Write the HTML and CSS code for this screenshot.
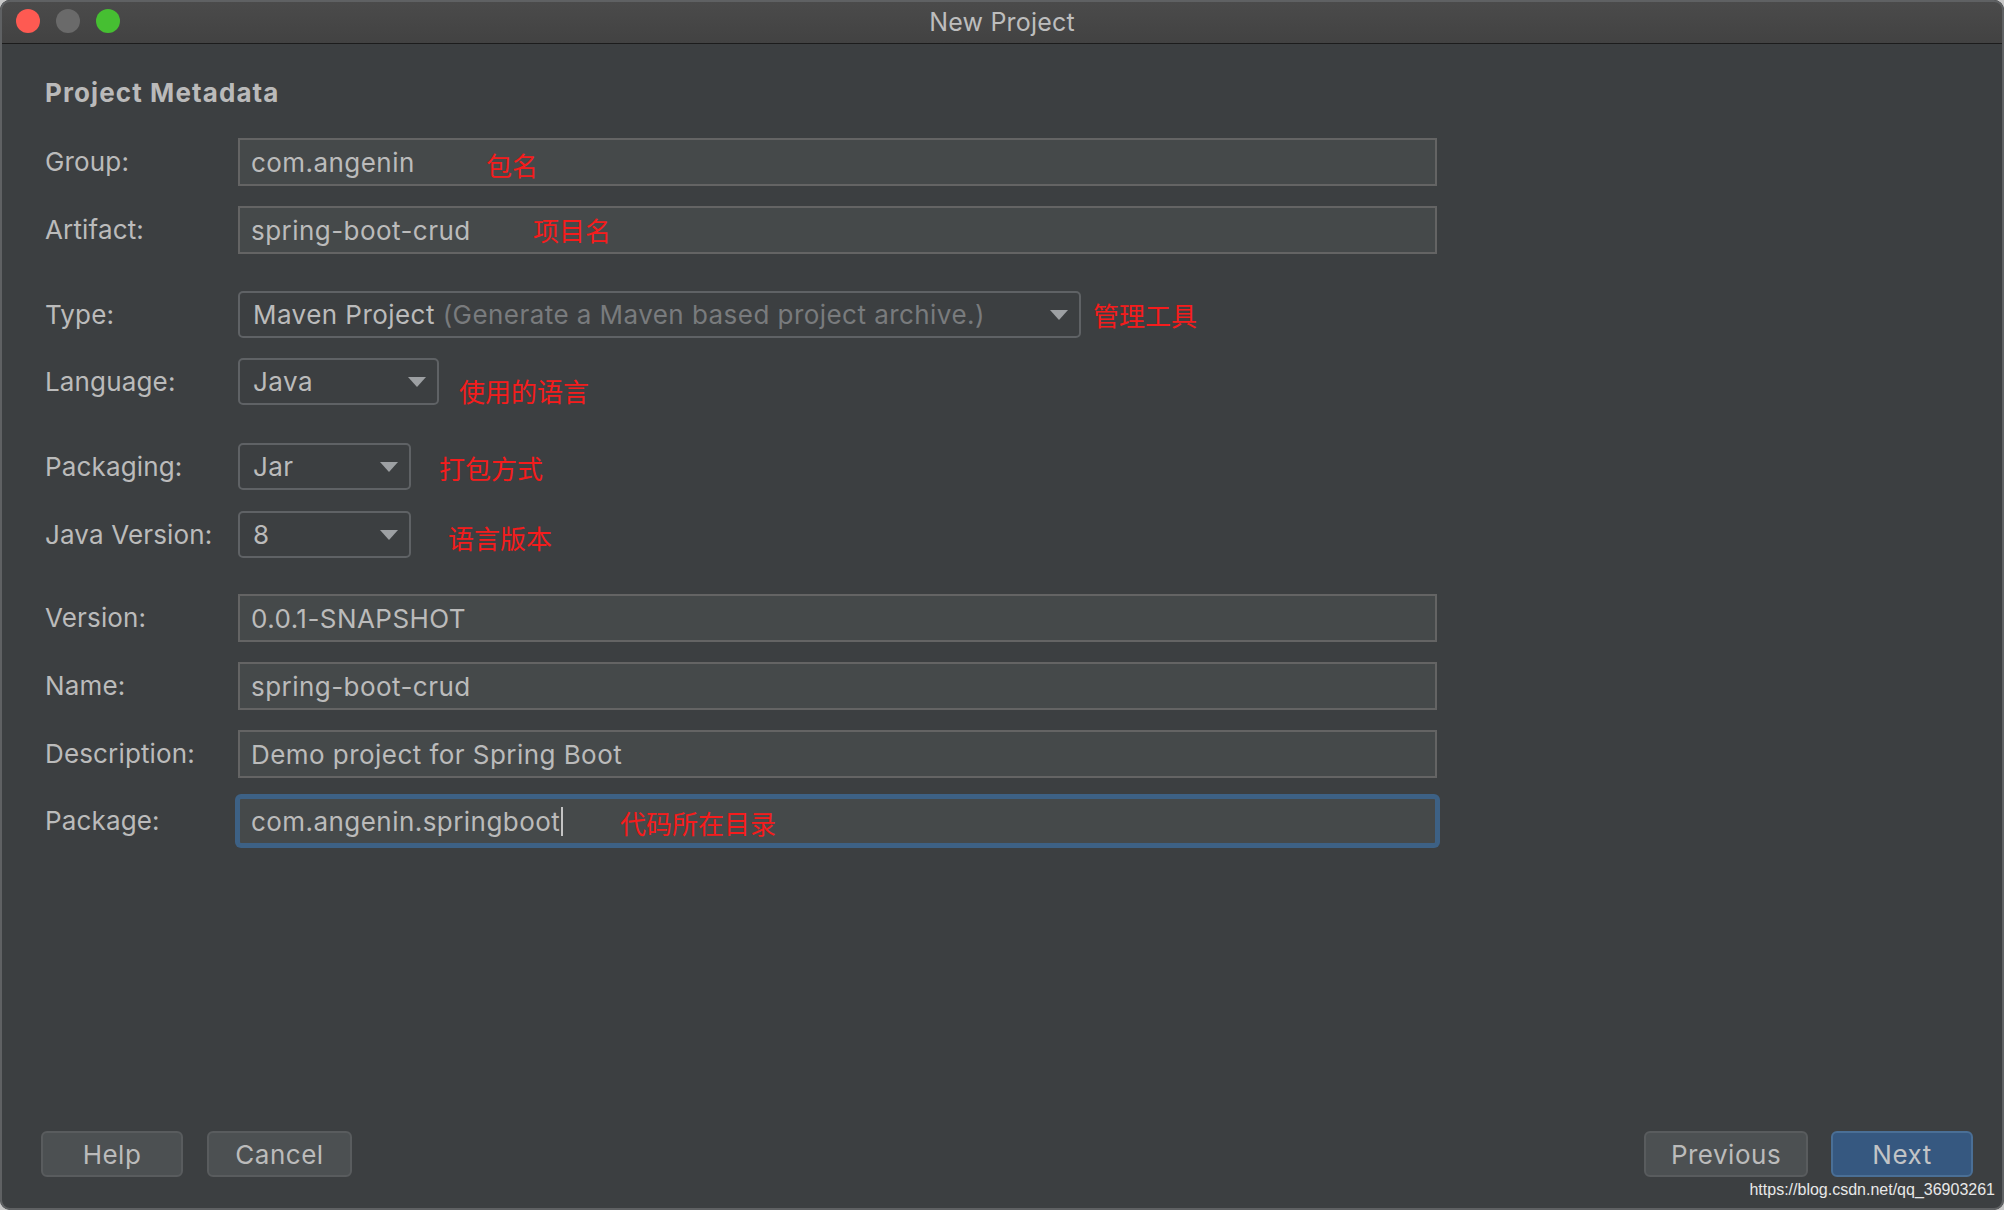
FILE: index.html
```html
<!DOCTYPE html>
<html lang="en">
<head>
<meta charset="utf-8">
<title>New Project</title>
<link rel="stylesheet" href="styles.css">
</head>
<body>
<div class="window">
  <header class="titlebar">
    <div class="lights">
      <span class="light red"></span>
      <span class="light gray"></span>
      <span class="light green"></span>
    </div>
    <div class="title">New Project</div>
    <div></div>
  </header>

  <main class="content">
    <h1 class="heading">Project Metadata</h1>

    <div class="row r-group">
      <span class="label">Group:</span>
      <div class="field">com.angenin</div>
      <span class="note n-group">包名</span>
    </div>

    <div class="row r-artifact">
      <span class="label">Artifact:</span>
      <div class="field">spring-boot-crud</div>
      <span class="note n-artifact">项目名</span>
    </div>

    <div class="row r-type">
      <span class="label">Type:</span>
      <div class="select s-type">
        <span>Maven Project <span class="hint">(Generate a Maven based project archive.)</span></span>
        <svg class="arrow" width="18" height="10" viewBox="0 0 18 10"><polygon points="0,0 18,0 9,10" fill="#9da0a3"/></svg>
      </div>
      <span class="note n-type">管理工具</span>
    </div>

    <div class="row r-lang">
      <span class="label">Language:</span>
      <div class="select s-lang">
        <span>Java</span>
        <svg class="arrow" width="18" height="10" viewBox="0 0 18 10"><polygon points="0,0 18,0 9,10" fill="#9da0a3"/></svg>
      </div>
      <span class="note n-lang">使用的语言</span>
    </div>

    <div class="row r-pack">
      <span class="label">Packaging:</span>
      <div class="select s-small">
        <span>Jar</span>
        <svg class="arrow" width="18" height="10" viewBox="0 0 18 10"><polygon points="0,0 18,0 9,10" fill="#9da0a3"/></svg>
      </div>
      <span class="note n-pack">打包方式</span>
    </div>

    <div class="row r-java">
      <span class="label">Java Version:</span>
      <div class="select s-small">
        <span>8</span>
        <svg class="arrow" width="18" height="10" viewBox="0 0 18 10"><polygon points="0,0 18,0 9,10" fill="#9da0a3"/></svg>
      </div>
      <span class="note n-java">语言版本</span>
    </div>

    <div class="row r-version">
      <span class="label">Version:</span>
      <div class="field">0.0.1-SNAPSHOT</div>
    </div>

    <div class="row r-name">
      <span class="label">Name:</span>
      <div class="field">spring-boot-crud</div>
    </div>

    <div class="row r-desc">
      <span class="label">Description:</span>
      <div class="field">Demo project for Spring Boot</div>
    </div>

    <div class="row r-package">
      <span class="label">Package:</span>
      <div class="field focused">com.angenin.springboot<span class="caret"></span></div>
      <span class="note n-package">代码所在目录</span>
    </div>
  </main>

  <footer class="footer">
    <div class="btns left">
      <button class="btn b-help">Help</button>
      <button class="btn b-cancel">Cancel</button>
    </div>
    <div class="btns right">
      <button class="btn b-prev">Previous</button>
      <button class="btn b-next primary">Next</button>
    </div>
  </footer>

  <div class="watermark">https://blog.csdn.net/qq_36903261</div>
</div>
</body>
</html>
```

FILE: styles.css
```css
* { box-sizing: border-box; }

html, body {
  margin: 0;
  padding: 0;
}

body {
  background: #c8c8c8;
  width: 2004px;
  height: 1210px;
  overflow: hidden;
  font-family: "Inter", "Noto Sans", sans-serif;
}

.window {
  position: relative;
  width: 2004px;
  height: 1210px;
  background: #3c3f41;
  border-radius: 10px;
  overflow: hidden;
  display: flex;
  flex-direction: column;
}

.window::after {
  content: "";
  position: absolute;
  inset: 0;
  border: 2px solid #5f6163;
  border-radius: 10px;
  pointer-events: none;
}

/* Title bar */
.titlebar {
  height: 44px;
  flex: none;
  display: grid;
  grid-template-columns: 1fr auto 1fr;
  align-items: center;
  background: linear-gradient(#4b4b4b, #424242);
  border-bottom: 1px solid #1c1c1c;
}

.lights {
  display: flex;
  gap: 16px;
  padding-left: 16px;
  padding-bottom: 1px;
}

.light {
  width: 24px;
  height: 24px;
  border-radius: 50%;
}
.light.red { background: #fe5a52; }
.light.gray { background: #6a6a6a; }
.light.green { background: #46bf32; }

.title {
  font-size: 25px;
  color: #bdbdbd;
  line-height: 30px;
  letter-spacing: 0.2px;
}

/* Content */
.content {
  padding: 33px 0 0 45px;
  color: #bbbbbb;
  font-size: 26px;
}

.heading {
  margin: 0;
  font-size: 26px;
  line-height: 32px;
  font-weight: 700;
  color: #bababa;
  letter-spacing: 1.1px;
}

.row {
  position: relative;
  display: flex;
  align-items: center;
}

.label {
  width: 193px;
  flex: none;
  line-height: 32px;
  letter-spacing: 0.15px;
}

.r-group { margin-top: 29px; }
.r-artifact { margin-top: 20px; }
.r-type { margin-top: 37px; }
.r-lang { margin-top: 20px; }
.r-pack { margin-top: 38px; }
.r-java { margin-top: 21px; }
.r-version { margin-top: 36px; }
.r-name { margin-top: 20px; }
.r-desc { margin-top: 20px; }
.r-package { margin-top: 19px; }

.field {
  width: 1199px;
  height: 48px;
  border: 2px solid #646464;
  background: #45494a;
  padding-left: 11px;
  display: flex;
  align-items: center;
  color: #bbbbbb;
  letter-spacing: 0.45px;
}

.field.focused {
  border-color: #3d6185;
  border-radius: 3px;
  box-shadow: 0 0 0 3px #3d6185;
}

.caret {
  display: inline-block;
  width: 2px;
  height: 29px;
  margin-left: 1px;
  background: #c4c4c4;
}

.select {
  height: 47px;
  border: 2px solid #5f6265;
  border-radius: 5px;
  background: #3c3f41;
  padding: 0 11px 0 13px;
  display: flex;
  align-items: center;
  justify-content: space-between;
  color: #bbbbbb;
  letter-spacing: 0.45px;
  white-space: nowrap;
}

.s-type { width: 843px; }
.s-lang { width: 201px; }
.s-small { width: 173px; }

.hint { color: #797b7d; }

.arrow { flex: none; display: block; }

/* Red annotations overlaid on the screenshot */
.note {
  position: absolute;
  font-family: "Noto Sans CJK SC", "Noto Sans", sans-serif;
  font-size: 26px;
  line-height: 26px;
  color: #f51c1c;
  white-space: nowrap;
}

.n-group { left: 441px; top: 14px; }
.n-artifact { left: 488px; top: 11px; }
.n-type { left: 1048px; top: 11px; }
.n-lang { left: 414px; top: 20px; }
.n-pack { left: 394px; top: 12px; }
.n-java { left: 403px; top: 14px; }
.n-package { left: 575px; top: 13px; }

/* Footer buttons */
.footer {
  margin-top: auto;
  display: flex;
  justify-content: space-between;
  padding: 0 31px 33px 41px;
}

.btns {
  display: flex;
}
.btns.left { gap: 24px; }
.btns.right { gap: 23px; }

.btn {
  height: 46px;
  border: 2px solid #595c5e;
  border-radius: 6px;
  background: #4c5052;
  color: #bbbbbb;
  font-family: "Inter", "Noto Sans", sans-serif;
  font-size: 26px;
  letter-spacing: 0.5px;
  padding: 0;
}

.b-help { width: 142px; }
.b-cancel { width: 145px; }
.b-prev { width: 164px; }
.b-next { width: 142px; }

.btn.primary {
  background: #365880;
  border-color: #4a6f96;
  color: #c2c4c6;
}

.watermark {
  position: absolute;
  right: 9px;
  bottom: 10px;
  font-family: "Liberation Sans", Arial, sans-serif;
  font-size: 16px;
  line-height: 20px;
  color: #e8e8e8;
}
```
